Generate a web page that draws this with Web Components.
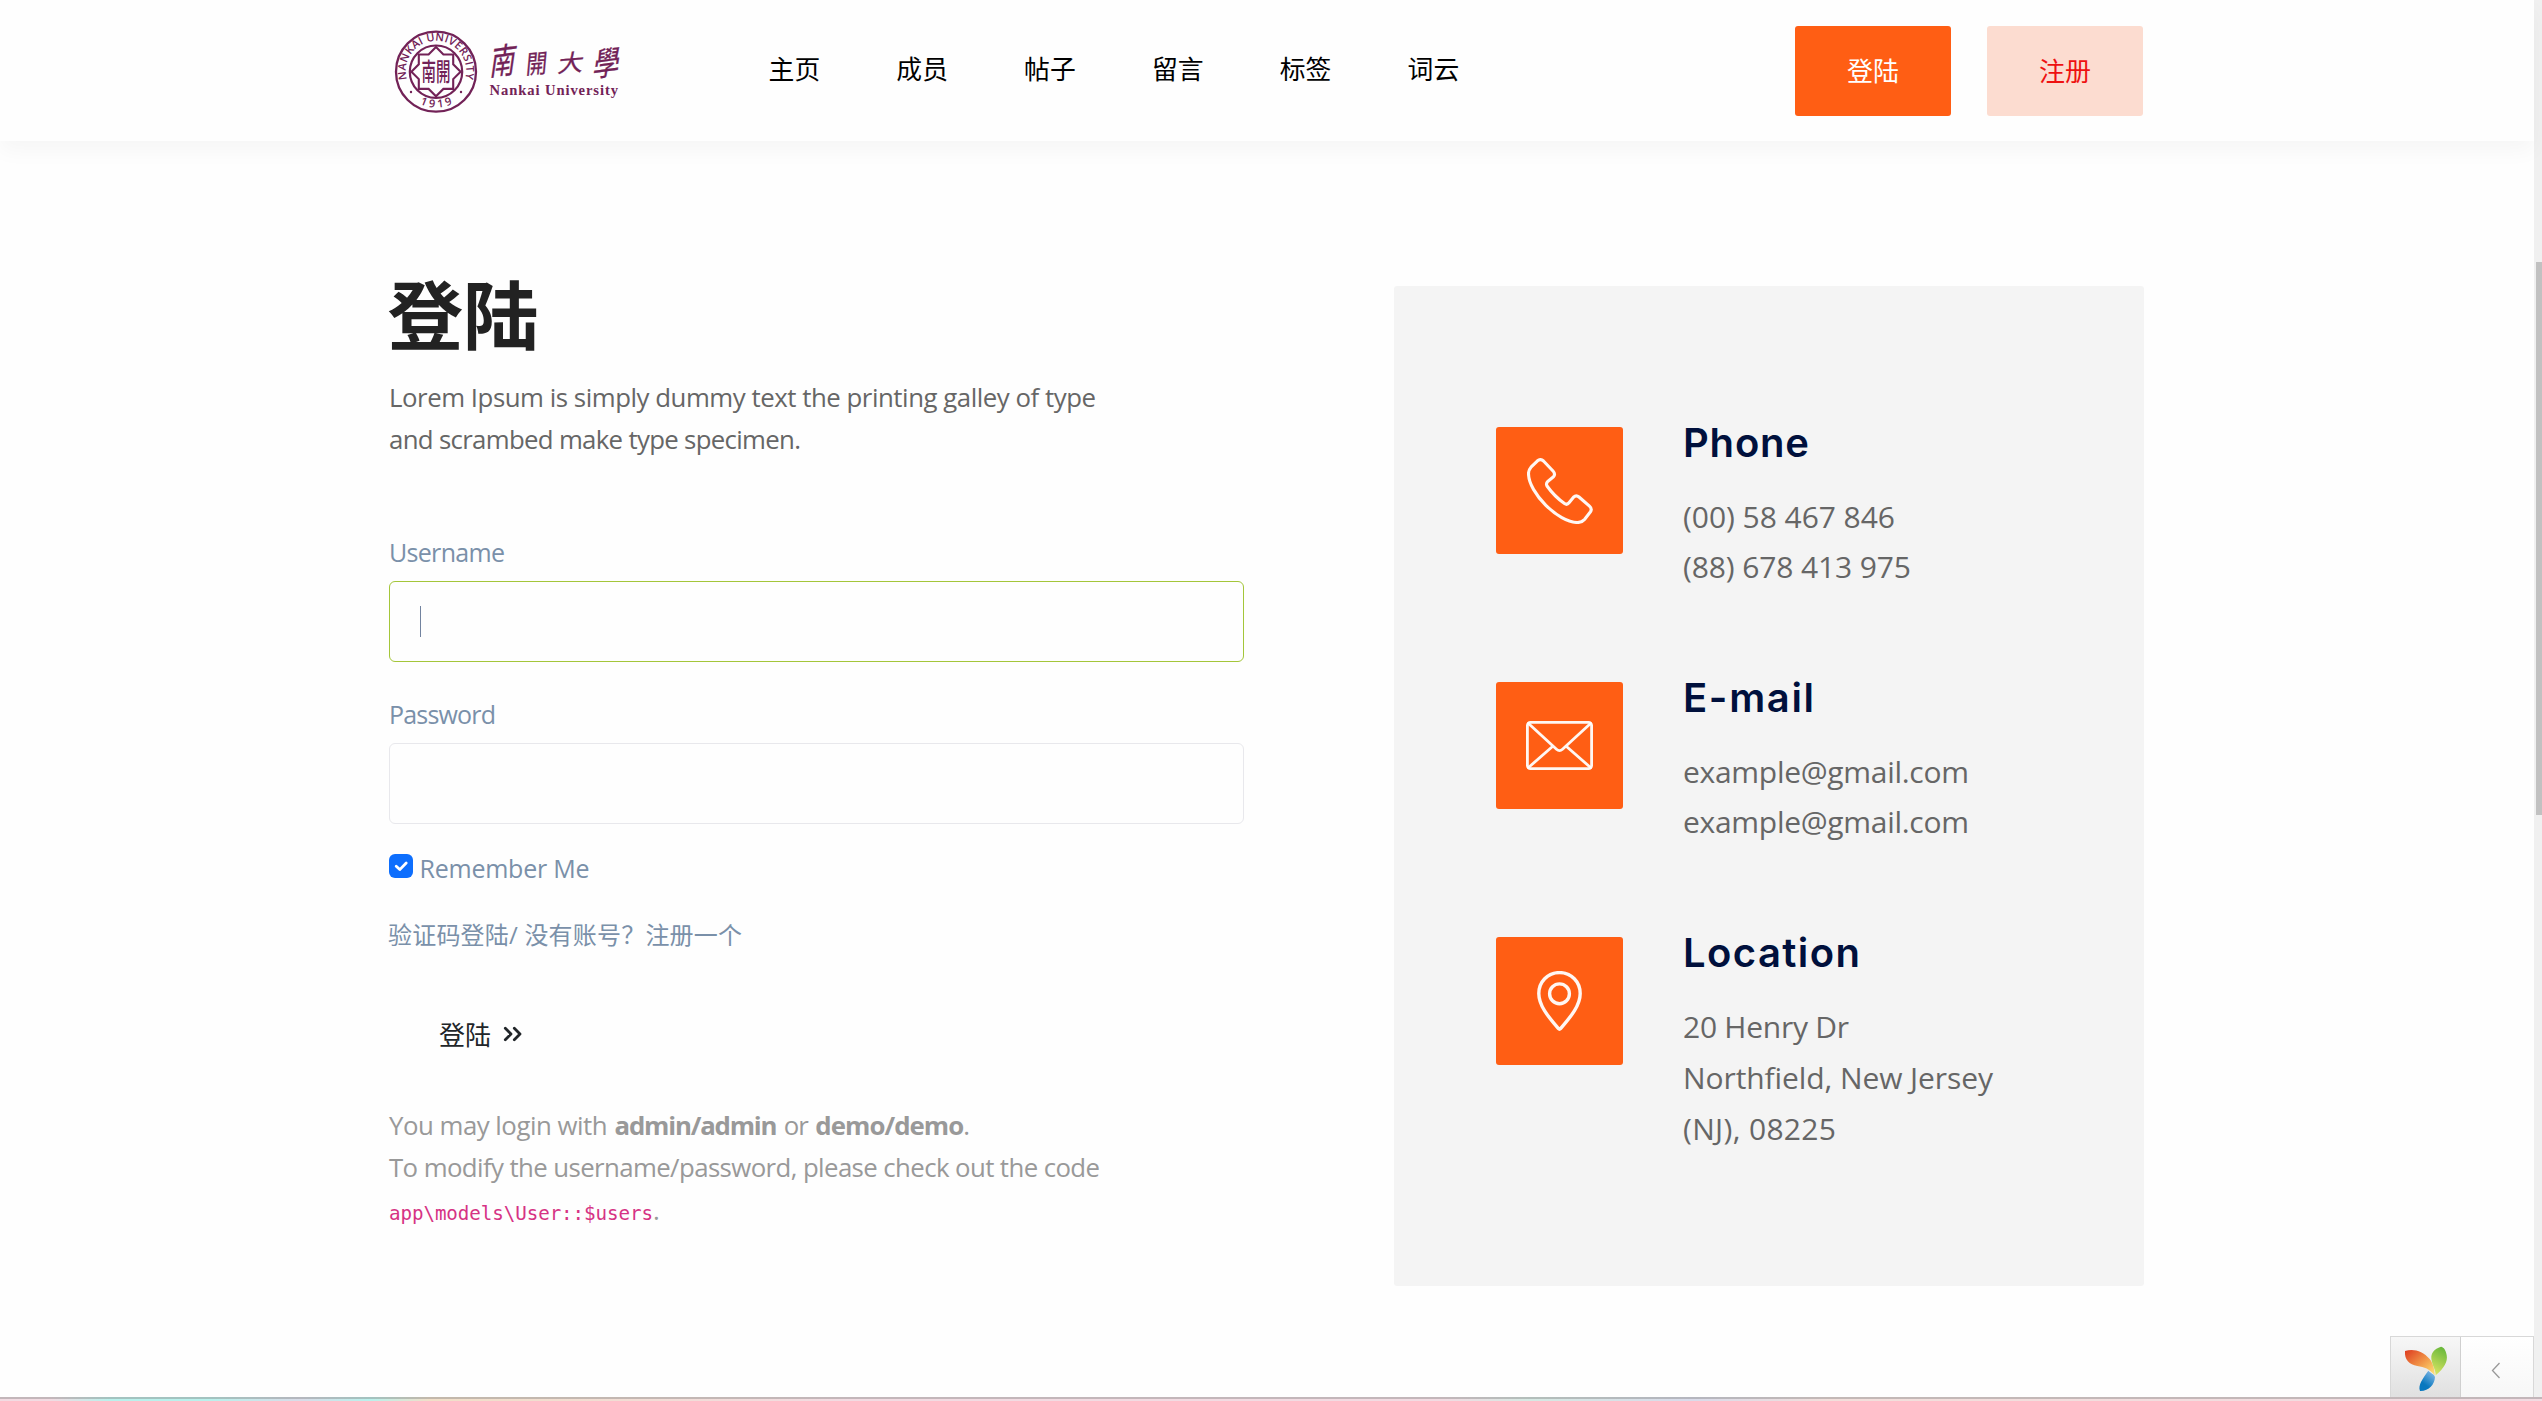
<!DOCTYPE html>
<html lang="zh-CN">
<head>
<meta charset="utf-8">
<title>登陆</title>
<style>
html,body{margin:0;height:100%;overflow:hidden;background:#fefefe}
body{font-family:"Open Sans","Noto Sans CJK SC",sans-serif}
</style>
</head>
<body>
<login-page></login-page>
<script>
const define = (name, html, setup) => {
  const t = document.createElement('template');
  t.innerHTML = html;
  customElements.define(name, class extends HTMLElement {
    constructor() {
      super();
      this.attachShadow({mode: 'open'}).append(t.content.cloneNode(true));
    }
    connectedCallback() { if (setup) setup(this, this.shadowRoot); }
  });
};

// One line of text whose tracking is set so that it spans a given width
define('fit-text', `<style>
:host{display:block;white-space:nowrap}
span{display:inline-block}
</style><span><slot></slot></span>`, (el, root) => {
  const s = root.querySelector('span');
  const n = el.textContent.length;
  const gap = (Number(el.getAttribute('w')) - s.getBoundingClientRect().width) / (n - 1);
  s.style.letterSpacing = gap.toFixed(3) + 'px';
});

define('site-logo', `<style>
:host{display:block;width:236px;height:90px}
svg{display:block;overflow:visible}
</style>
<svg width="236" height="90" viewBox="0 0 236 90" fill="#722257">
<defs>
<path id="top" d="M17 53.5 A30.2 30.2 0 1 1 75 53.5"/>
<path id="low" d="M20 71 A37 37 0 0 0 72 71"/>
</defs>
<g fill="none" stroke="#722257">
<circle cx="46" cy="45.7" r="40" stroke-width="2.3"/>
<circle cx="46" cy="45.7" r="26.2" stroke-width="2.2"/>
<path transform="translate(0 .7)" d="M28.8 27.8H38.6L46 20.4L53.4 27.8H63.2V37.6L70.6 45L63.2 52.4V62.2H53.4L46 69.6L38.6 62.2H28.8V52.4L21.4 45L28.8 37.6Z" stroke-width="2.1"/>
</g>
<circle cx="21" cy="66" r="1.2"/><circle cx="71" cy="66" r="1.2"/>
<text font-family="Open Sans" font-weight="600" font-size="11"><textPath href="#top" textLength="111">NANKAI UNIVERSITY</textPath></text>
<text font-family="Open Sans" font-weight="600" font-size="11"><textPath href="#low" startOffset="12" textLength="34">1919</textPath></text>
<text font-family="Noto Sans CJK TC" font-weight="500" font-size="14.5" transform="translate(31.6 56) scale(1 1.75)" y="-.6">南開</text>
<g font-family="Noto Sans CJK TC" font-weight="400" stroke="#722257" stroke-width=".3">
<text transform="translate(99 49.5) skewX(-16) rotate(-8) scale(.8 1.16)" font-size="31">南</text>
<text transform="translate(135.5 48) skewX(-10) rotate(-5) scale(.86 1.08)" font-size="24">開</text>
<text transform="translate(167 46.5) skewX(-14) rotate(-5) scale(1 .95)" font-size="25">大</text>
<text transform="translate(202 51) skewX(-16) rotate(-8) scale(.86 1.12)" font-size="30">學</text>
</g>
<text x="99.5" y="69" font-family="Liberation Serif" font-weight="700" font-size="14.6" textLength="128.5">Nankai University</text>
</svg>`);

define('nav-link', `<style>
:host{display:block;font-size:25.8px;line-height:40px;color:#000;letter-spacing:.1px;white-space:nowrap}
</style><slot></slot>`);

define('solid-button', `<style>
:host{display:flex;align-items:center;justify-content:center;box-sizing:border-box;width:156px;height:90px;border-radius:3px;background:#ff5e14;color:#fff;font-size:26px;line-height:40px}
:host([soft]){background:#fcdcd0;color:#ee1111}
</style><slot></slot>`);

define('site-header', `<style>
:host{display:flex;align-items:flex-start;box-sizing:border-box;height:141px;padding:26px 391px 0 390px;background:#fefefe;box-shadow:0 10px 20px rgba(0,0,0,.035)}
nav{display:flex;gap:76px;margin:23px 0 0 142.5px}
.actions{display:flex;gap:36px;margin-left:auto}
</style>
<site-logo></site-logo>
<nav><nav-link>主页</nav-link><nav-link>成员</nav-link><nav-link>帖子</nav-link><nav-link>留言</nav-link><nav-link>标签</nav-link><nav-link>词云</nav-link></nav>
<div class="actions"><solid-button>登陆</solid-button><solid-button soft>注册</solid-button></div>`);

define('text-field', `<style>
:host{display:block;color:#7a90a9;font-size:25px;line-height:40px}
.box{display:flex;align-items:center;box-sizing:border-box;height:81px;margin-top:9px;padding-left:30px;border:1px solid #e8e8ec;border-radius:6px}
:host([active]) .box{border-color:#a4c639}
:host([active]) .box::before{content:"";width:1px;height:31px;background:#72839f}
</style><slot></slot><div class="box"></div>`);

define('login-form', `<style>
:host{display:block;width:855px}
h1{margin:0 0 0 -1.5px;font-size:75.5px;line-height:76px;font-weight:700;color:#222}
.lead{margin-top:23px;font-size:25.8px;line-height:42px;color:#666}
text-field{margin-top:72px}
text-field + text-field{margin-top:32px}
.remember{display:flex;gap:6.5px;margin-top:24px;font-size:25px;line-height:40px;color:#7a90a9}
.remember svg{margin-top:6px}
.links{margin:27px 0 0 -1px;font-size:24px;line-height:40px;color:#7a90a9}
.submit{display:flex;align-items:center;margin:60px 0 0 50px;font-size:26px;line-height:40px;color:#212529}
.submit svg{margin:-2px 0 0 12px}
.hint{margin-top:49px;font-size:25.8px;line-height:42.3px;color:#999}
.row{display:flex;gap:7.5px}
.row span{margin-left:-7.5px}
b{font-weight:700}
.code{display:flex;align-items:baseline}
code{font-family:"DejaVu Sans Mono","Liberation Mono",monospace;font-size:19.2px;color:#d63384}
</style>
<h1>登陆</h1>
<div class="lead"><fit-text w="707">Lorem Ipsum is simply dummy text the printing galley of type</fit-text><fit-text w="412">and scrambed make type specimen.</fit-text></div>
<text-field active><fit-text w="116">Username</fit-text></text-field>
<text-field><fit-text w="107">Password</fit-text></text-field>
<div class="remember"><svg width="24" height="24" viewBox="0 0 24 24"><rect width="24" height="24" rx="6" fill="#0d6efd"/><path d="M7.2 12.2L10.8 15.6L17.2 9" fill="none" stroke="#fff" stroke-width="2.8" stroke-linecap="round" stroke-linejoin="round"/></svg><fit-text w="170">Remember Me</fit-text></div>
<div class="links"><fit-text w="354">验证码登陆/ 没有账号？注册一个</fit-text></div>
<div class="submit">登陆<svg width="20" height="16" viewBox="0 0 20 16" fill="none" stroke="#212529" stroke-width="2.8" stroke-linecap="round" stroke-linejoin="round"><path d="M2.3 2.3L8 8L2.3 13.7M11.3 2.3L17 8L11.3 13.7"/></svg></div>
<div class="hint"><div class="row"><fit-text w="218.5">You may login with</fit-text><b><fit-text w="163">admin/admin</fit-text></b><fit-text w="25">or</fit-text><b><fit-text w="149">demo/demo</fit-text></b><span>.</span></div><fit-text w="711">To modify the username/password, please check out the code</fit-text><div class="code"><code><fit-text w="264">app\\models\\User::$users</fit-text></code><span>.</span></div></div>`);

define('contact-item', `<style>
:host{display:flex;gap:60px;align-items:flex-start;height:255px}
.tile{display:flex;align-items:center;justify-content:center;width:127px;height:127px;border-radius:3px;background:#ff5e14}
.title{margin-top:-9px;font-family:Inter,"Open Sans",sans-serif;font-weight:600;font-size:40px;line-height:50px;color:#00103c}
.lines{margin-top:24px;font-size:30px;line-height:50px;color:#666}
:host([tall]) .lines{line-height:50.8px}
:host([tall]) .tile{height:128px}
</style>
<div class="tile"><slot name="icon"></slot></div>
<div><div class="title"><slot name="title"></slot></div><div class="lines"><slot></slot></div></div>`);

define('contact-card', `<style>
:host{display:block;box-sizing:border-box;width:750px;height:1000px;padding:141px 0 0 102px;border-radius:3px;background:#f4f4f4}
svg{display:block;fill:none;stroke:#fff;stroke-opacity:.95;stroke-linejoin:round;stroke-linecap:round}
</style>
<contact-item>
<svg slot="icon" width="66" height="66" viewBox="0 0 66 66" stroke-width="3.1"><path d="M10.5 2.8Q13.5.3 16.5 3L26 13Q28.8 16 26.5 18.8L21 23.2Q18.6 25.4 20 28C25 35 31 41 37.5 45.5Q40 47.3 42 44.8L46.5 39.2Q49.2 36.5 52 39L62.5 48.2Q65.5 51 63.3 54L57.5 61.5Q55 64.5 50.5 64.5C31.5 64.5 1.5 35 1.5 15.5Q1.5 12 4 9.2Z"/></svg>
<fit-text slot="title" w="126">Phone</fit-text>
<fit-text w="212">(00) 58 467 846</fit-text><fit-text w="228">(88) 678 413 975</fit-text>
</contact-item>
<contact-item>
<svg slot="icon" width="67" height="49" viewBox="0 0 67 49" stroke-width="2.8"><rect x="1.4" y="1.4" width="64.2" height="46.2" rx="3"/><path d="M2.5 2.5L30.5 28.3Q33.5 31 36.5 28.3L64.5 2.5M26.5 25.5L2.5 46.5M40.5 25.5L64.5 46.5"/></svg>
<fit-text slot="title" w="131">E-mail</fit-text>
<fit-text w="286">example@gmail.com</fit-text><fit-text w="286">example@gmail.com</fit-text>
</contact-item>
<contact-item tall>
<svg slot="icon" width="45" height="60" viewBox="0 0 45 60" stroke-width="3.4"><path d="M22.5 1.6C10.5 1.6 1.8 11 1.8 22.5C1.8 35 12 46.5 21.5 57.7Q22.5 58.8 23.5 57.7C33 46.5 43.2 35 43.2 22.5C43.2 11 34.5 1.6 22.5 1.6Z"/><circle cx="22.5" cy="22.8" r="9.9"/></svg>
<fit-text slot="title" w="177">Location</fit-text>
<fit-text w="166">20 Henry Dr</fit-text><fit-text w="310">Northfield, New Jersey</fit-text><fit-text w="153">(NJ), 08225</fit-text>
</contact-item>`);

define('debug-toolbar', `<style>
:host{display:flex;box-sizing:border-box;width:144px;height:61px;border:1px solid #d8d8d8;border-bottom:0;background:linear-gradient(#f7f7f7,#e0e0e0)}
.logo{width:69px;border-right:1px solid #d0d0d0}
.toggle{flex:1;display:flex;align-items:center;justify-content:center;background:linear-gradient(#fff,#f7f7f7)}
svg{display:block}
.toggle svg{margin:6px 2px 0 0}
</style>
<div class="logo"><svg width="69" height="60" viewBox="87 81 207 180">
<defs><linearGradient id="o" x1="0" y1="0" x2="1" y2="1"><stop offset="0" stop-color="#dd3a20"/><stop offset=".5" stop-color="#f09045"/><stop offset="1" stop-color="#ffe878"/></linearGradient>
<linearGradient id="g" x1=".6" y1="0" x2=".3" y2="1"><stop offset="0" stop-color="#6ab83c"/><stop offset="1" stop-color="#dbe663"/></linearGradient>
<linearGradient id="b" x1=".8" y1="0" x2=".2" y2="1"><stop offset="0" stop-color="#86b9e6"/><stop offset=".7" stop-color="#0878bf"/></linearGradient></defs>
<path fill="url(#o)" d="M129 123C152 115 182 121 203 147C214 161 218 180 218 196C202 176 187 171 166 168C142 163 127 150 129 123Z"/>
<path fill="url(#g)" d="M237 110C216 117 207 128 208 146C210 165 222 180 221 196C246 175 258 155 254 135C251 120 246 112 237 110Z"/>
<path fill="url(#b)" d="M199 182C207 190 217 193 219 201C218 224 200 244 174 243C167 225 183 205 199 182Z"/></svg></div>
<div class="toggle"><svg width="10" height="17" viewBox="0 0 10 17" fill="none" stroke="#999" stroke-width="1.3"><path d="M8.5 1L1.5 8.5L8.5 16"/></svg></div>`);

define('page-scrollbar', `<style>
:host{display:block;box-sizing:border-box;width:8px;padding:262px 0 0 2px;background:#f0f0f0}
div{height:553px;background:#c1c1c1}
</style><div></div>`);

define('login-page', `<style>
:host{display:grid;grid-template:1397px 4px / 2534px 8px;height:1401px;background:#fefefe}
.view{position:relative}
main{display:flex;gap:150px;align-items:flex-start;padding:136px 0 0 389px}
contact-card{margin-top:9px}
debug-toolbar{position:absolute;right:0;bottom:0}
.edge{grid-column:1 / -1;border-top:2px solid rgba(130,130,130,.42);background:linear-gradient(90deg,#f2dbe2 0,#f2dbe2 50px,#baf1ec 110px,#baf1ec 210px,#d9dce8 300px,#baf1ec 370px,#f1dfc8 430px,#f2dbe2 850px,#f2dbe2 1440px,#d6e9e3 1530px,#d9dbea 1690px,#f2dfdb 1830px,#f2dbe2 100%)}
</style>
<div class="view"><site-header></site-header><main><login-form></login-form><contact-card></contact-card></main><debug-toolbar></debug-toolbar></div>
<page-scrollbar></page-scrollbar>
<div class="edge"></div>`);
</script>
</body>
</html>
